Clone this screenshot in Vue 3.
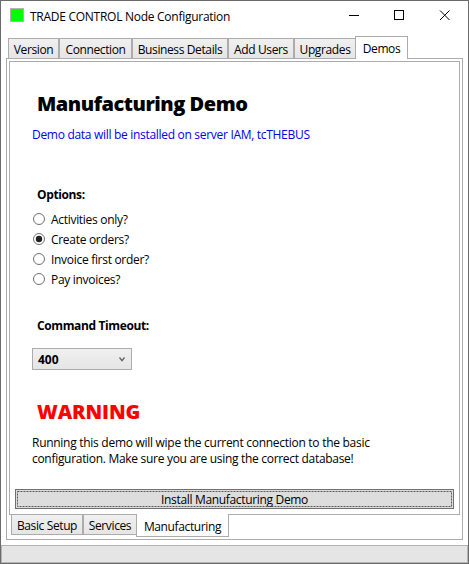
<script setup>
import { ref } from 'vue'

const tabs = [
  { label: 'Version', cls: 'version' },
  { label: 'Connection', cls: 'connection' },
  { label: 'Business Details', cls: 'business' },
  { label: 'Add Users', cls: 'users' },
  { label: 'Upgrades', cls: 'upgrades' },
  { label: 'Demos', cls: 'demos' },
]
const subTabs = [
  { label: 'Basic Setup', cls: 'basic' },
  { label: 'Services', cls: 'services' },
  { label: 'Manufacturing', cls: 'manufacturing' },
]
const options = ['Activities only?', 'Create orders?', 'Invoice first order?', 'Pay invoices?']
const tab = ref('Demos')
const subTab = ref('Manufacturing')
const option = ref('Create orders?')
</script>

<template>
  <div class="window">
    <header class="titlebar">
      <span class="app-icon"></span>
      <span class="title">TRADE CONTROL Node Configuration</span>
      <svg class="controls" width="103" height="12" viewBox="0 0 103 12" fill="none" stroke="#000">
        <path d="M0 5.5H10" />
        <rect x="45.5" y="0.5" width="9" height="9" />
        <path d="M91 0.5L100.5 10M100.5 0.5L91 10" />
      </svg>
    </header>

    <nav class="tabs">
      <div v-for="t in tabs" :key="t.label" class="tab" :class="[t.cls, { on: tab === t.label }]" @click="tab = t.label">
        <span>{{ t.label }}</span>
      </div>
    </nav>

    <main class="outer">
      <section class="inner">
        <h1 class="heading">Manufacturing Demo</h1>
        <p class="server">Demo data will be installed on server IAM, tcTHEBUS</p>
        <h2 class="label options-label">Options:</h2>
        <div class="options">
          <div v-for="o in options" :key="o" class="option" @click="option = o">
            <svg width="12" height="12" viewBox="0 0 12 12">
              <circle cx="6" cy="6" r="5.5" fill="#fff" stroke="#707070" />
              <circle v-if="option === o" cx="6" cy="6" r="3.2" fill="#212121" />
            </svg>
            <span>{{ o }}</span>
          </div>
        </div>
        <h2 class="label timeout-label">Command Timeout:</h2>
        <div class="combo">
          <span>400</span>
          <svg width="6" height="5" viewBox="0 0 6 5" fill="none" stroke="#606060" stroke-width="1.3">
            <path d="M0.5 0.5L3 3.7L5.5 0.5" />
          </svg>
        </div>
        <h1 class="warning">WARNING</h1>
        <p class="notice">
          <span class="line-a">Running this demo will wipe the current connection to the basic</span><br />
          <span class="line-b">configuration. Make sure you are using the correct database!</span>
        </p>
        <div class="install">
          <svg class="focus" width="435" height="16" viewBox="0 0 435 16" fill="none" stroke="#5a5a5a" stroke-dasharray="2 1">
            <rect x="0.5" y="0.5" width="434" height="15" />
          </svg>
          <span>Install Manufacturing Demo</span>
        </div>
      </section>
      <nav class="subtabs">
        <div v-for="t in subTabs" :key="t.label" class="subtab" :class="[t.cls, { on: subTab === t.label }]" @click="subTab = t.label">
          <span>{{ t.label }}</span>
        </div>
      </nav>
    </main>
    <footer class="status"></footer>
  </div>
</template>

<style>
body { margin: 0; background: #fff; overflow: hidden; }
</style>

<style scoped>
* { box-sizing: border-box; }
h1, h2, p { margin: 0; }
span { white-space: nowrap; }
.window {
  width: 469px;
  height: 564px;
  display: flex;
  flex-direction: column;
  background: #fff;
  border: 1px solid #6b6b6b;
  font: 12px/16px "Open Sans", "Noto Sans", sans-serif;
  letter-spacing: -0.3px;
  color: #000;
}
.titlebar {
  height: 35px;
  flex: none;
  display: flex;
  align-items: flex-start;
  padding: 7px 0 0 9px;
}
.app-icon { width: 14px; height: 14px; background: #0f0; border: 1px solid #b4b4b4; }
.title { margin: 1px 0 0 6px; width: 319px; line-height: 16px; letter-spacing: -0.27px; }
.controls { margin-top: 2px; flex: none; }
.tabs { height: 23px; flex: none; display: flex; align-items: flex-end; padding-left: 7px; position: relative; z-index: 1; }
.tab, .subtab {
  display: flex;
  justify-content: center;
  background: linear-gradient(#f0f0f0, #e5e5e5);
  border: 1px solid #acacac;
  flex: none;
  letter-spacing: -0.38px;
}
.tab { height: 20px; padding-top: 3px; border-bottom: 0; margin-bottom: 1px; }
.tab.on { height: 23px; padding-top: 4px; background: #fff; margin-bottom: 0; margin-left: -1px; }
.version { width: 51px; }
.connection { width: 73px; }
.business { width: 96px; }
.users { width: 66px; }
.upgrades { width: 62px; }
.demos { width: 53px; }
.outer {
  width: 457px;
  height: 482px;
  flex: none;
  margin: -1px 0 0 5px;
  border: 1px solid #acacac;
  padding: 2px;
}
.inner {
  width: 451px;
  height: 454px;
  border: 1px solid #acacac;
  padding: 0 5px;
  display: flex;
  flex-direction: column;
  align-items: flex-start;
}
.heading, .warning { font-size: 20px; line-height: 28px; font-weight: 800; white-space: nowrap; }
.heading { margin: 28px 0 0 22px; letter-spacing: -0.48px; }
.server { margin: 9px 0 0 17px; color: #00f; white-space: nowrap; }
.label { font-size: 12px; line-height: 16px; font-weight: 700; margin-left: 22px; white-space: nowrap; letter-spacing: -0.38px; }
.options-label { margin-top: 44px; }
.options { margin: 7px 0 0 18px; }
.option { display: flex; align-items: flex-start; height: 20px; padding-top: 2px; }
.option svg { margin-top: 1px; }
.option span { margin: 0 0 0 6px; }
.timeout-label { margin-top: 28px; }
.combo {
  width: 100px;
  height: 22px;
  margin: 14px 0 0 17px;
  padding: 0 6px 0 5px;
  border: 1px solid #acacac;
  background: linear-gradient(#f0f0f0, #e5e5e5);
  display: flex;
  align-items: center;
  justify-content: space-between;
  font-weight: 700;
  letter-spacing: 0;
}
.combo span { padding-top: 2px; }
.warning { margin: 28px 0 0 22px; color: #f00; letter-spacing: -0.12px; }
.notice { margin: 9px 0 0 17px; letter-spacing: -0.28px; }
.line-b { letter-spacing: -0.3px; }
.install {
  width: 439px;
  height: 20px;
  margin-top: 22px;
  border: 1px solid #707070;
  background: #ddd;
  display: flex;
  justify-content: center;
  position: relative;
  line-height: 20px;
  letter-spacing: -0.33px;
}
.focus { position: absolute; left: 1px; top: 1px; }
.subtabs { display: flex; align-items: flex-start; padding-left: 2px; }
.subtab { height: 20px; border-top: 0; padding-top: 3px; }
.subtab.on { height: 23px; margin: -1px 0 0 -1px; background: #fff; padding-top: 5px; }
.basic { width: 72px; }
.services { width: 54px; }
.manufacturing { width: 93px; }
.status { height: 18px; flex: none; margin-top: 5px; background: #e5e5e5; border: 1px solid #b4b4b4; }
</style>
